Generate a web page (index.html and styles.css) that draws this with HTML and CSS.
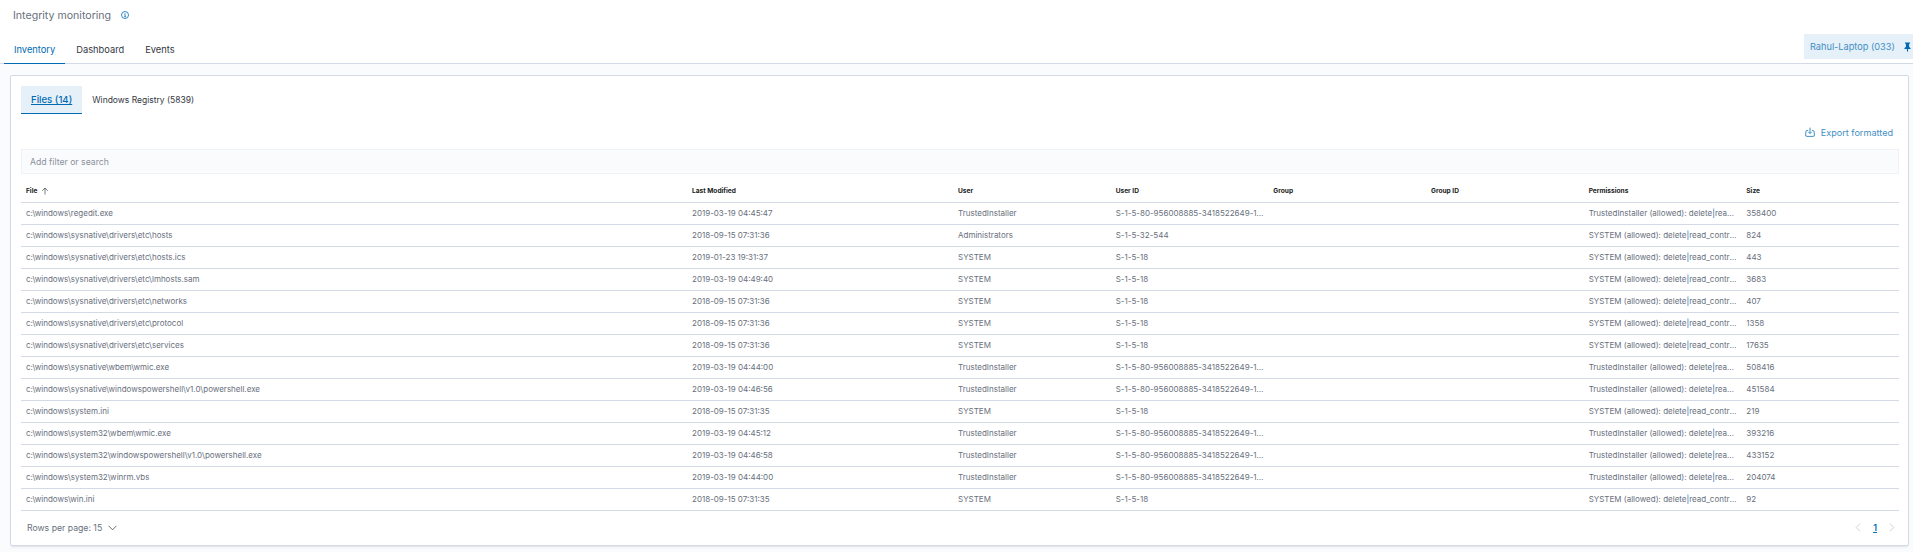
FILE: index.html
```html
<!DOCTYPE html>
<html lang="en">
<head>
    <meta charset="UTF-8">
    <title>Integrity monitoring</title>
    <link rel="stylesheet" href="styles.css">
</head>
<body>
    <header class="page-head">
        <div class="title-row">
            <h1>Integrity monitoring</h1>
            <svg class="info-icon" viewBox="0 0 16 16" width="8" height="8"><circle cx="8" cy="8" r="7" fill="none" stroke="#006bb4" stroke-width="1.6"/><path d="M6.5 7.2h1.8v4M6.3 11.4h3.6M8 4.2v1.4" fill="none" stroke="#006bb4" stroke-width="1.6"/></svg>
        </div>
        <div class="tabs-row">
            <nav class="main-tabs">
                <a class="main-tab active">Inventory</a>
                <a class="main-tab">Dashboard</a>
                <a class="main-tab">Events</a>
            </nav>
            <div class="agent-pill">
                <span>Rahul-Laptop (033)</span>
                <svg viewBox="0 0 16 16" width="9" height="10"><path d="M3.5 0h9v1.5l-1.6 1v5.2l2.6 2.3v1.500H9V16H7v-4.500H2.500V10l2.600-2.300V2.500l-1.600-1z" fill="#006bb4"/></svg>
            </div>
        </div>
    </header>

    <main class="content">
        <section class="panel">
            <div class="sub-tabs">
                <a class="sub-tab active">Files (14)</a>
                <a class="sub-tab">Windows Registry (5839)</a>
            </div>
            <div class="export-row">
                <a class="export-link">
                    <svg viewBox="0 0 16 16" width="10" height="10"><path d="M5 5.500H3.500a2 2 0 0 0-2 1.800L1 12.500a2 2 0 0 0 2 2.500h10a2 2 0 0 0 2-2.500l-.5-5.200a2 2 0 0 0-2-1.800H11M8 1v9M5 7.500 8 10.500l3-3" fill="none" stroke="#006bb4" stroke-width="1.200"/></svg>
                    Export formatted
                </a>
            </div>
            <div class="search-box">Add filter or search</div>
            <table class="files-table">
                <colgroup>
                    <col class="col-file">
                    <col class="col-date">
                    <col span="6">
                </colgroup>
                <thead>
                    <tr>
                        <th>File <svg class="sort-icon" viewBox="0 0 16 16" width="8" height="8"><path d="M8 15V2M2.500 7.500 8 2l5.500 5.500" fill="none" stroke="#343741" stroke-width="1.300"/></svg></th>
                        <th>Last Modified</th>
                        <th>User</th>
                        <th>User ID</th>
                        <th>Group</th>
                        <th>Group ID</th>
                        <th>Permissions</th>
                        <th>Size</th>
                    </tr>
                </thead>
                <tbody>
                    <tr><td>c:\windows\regedit.exe</td><td>2019-03-19 04:45:47</td><td>TrustedInstaller</td><td>S-1-5-80-956008885-3418522649-1831038044-1853292631-2271478464</td><td></td><td></td><td>TrustedInstaller (allowed): delete<i>|</i>read_control|write_dac</td><td>358400</td></tr>
                    <tr><td>c:\windows\sysnative\drivers\etc\hosts</td><td>2018-09-15 07:31:36</td><td>Administrators</td><td>S-1-5-32-544</td><td></td><td></td><td>SYSTEM (allowed): delete<i>|</i>read_control|write_dac</td><td>824</td></tr>
                    <tr><td>c:\windows\sysnative\drivers\etc\hosts.ics</td><td>2019-01-23 19:31:37</td><td>SYSTEM</td><td>S-1-5-18</td><td></td><td></td><td>SYSTEM (allowed): delete<i>|</i>read_control|write_dac</td><td>443</td></tr>
                    <tr><td>c:\windows\sysnative\drivers\etc\lmhosts.sam</td><td>2019-03-19 04:49:40</td><td>SYSTEM</td><td>S-1-5-18</td><td></td><td></td><td>SYSTEM (allowed): delete<i>|</i>read_control|write_dac</td><td>3683</td></tr>
                    <tr><td>c:\windows\sysnative\drivers\etc\networks</td><td>2018-09-15 07:31:36</td><td>SYSTEM</td><td>S-1-5-18</td><td></td><td></td><td>SYSTEM (allowed): delete<i>|</i>read_control|write_dac</td><td>407</td></tr>
                    <tr><td>c:\windows\sysnative\drivers\etc\protocol</td><td>2018-09-15 07:31:36</td><td>SYSTEM</td><td>S-1-5-18</td><td></td><td></td><td>SYSTEM (allowed): delete<i>|</i>read_control|write_dac</td><td>1358</td></tr>
                    <tr><td>c:\windows\sysnative\drivers\etc\services</td><td>2018-09-15 07:31:36</td><td>SYSTEM</td><td>S-1-5-18</td><td></td><td></td><td>SYSTEM (allowed): delete<i>|</i>read_control|write_dac</td><td>17635</td></tr>
                    <tr><td>c:\windows\sysnative\wbem\wmic.exe</td><td>2019-03-19 04:44:00</td><td>TrustedInstaller</td><td>S-1-5-80-956008885-3418522649-1831038044-1853292631-2271478464</td><td></td><td></td><td>TrustedInstaller (allowed): delete<i>|</i>read_control|write_dac</td><td>508416</td></tr>
                    <tr><td>c:\windows\sysnative\windowspowershell\v1.0\powershell.exe</td><td>2019-03-19 04:46:56</td><td>TrustedInstaller</td><td>S-1-5-80-956008885-3418522649-1831038044-1853292631-2271478464</td><td></td><td></td><td>TrustedInstaller (allowed): delete<i>|</i>read_control|write_dac</td><td>451584</td></tr>
                    <tr><td>c:\windows\system.ini</td><td>2018-09-15 07:31:35</td><td>SYSTEM</td><td>S-1-5-18</td><td></td><td></td><td>SYSTEM (allowed): delete<i>|</i>read_control|write_dac</td><td>219</td></tr>
                    <tr><td>c:\windows\system32\wbem\wmic.exe</td><td>2019-03-19 04:45:12</td><td>TrustedInstaller</td><td>S-1-5-80-956008885-3418522649-1831038044-1853292631-2271478464</td><td></td><td></td><td>TrustedInstaller (allowed): delete<i>|</i>read_control|write_dac</td><td>393216</td></tr>
                    <tr><td>c:\windows\system32\windowspowershell\v1.0\powershell.exe</td><td>2019-03-19 04:46:58</td><td>TrustedInstaller</td><td>S-1-5-80-956008885-3418522649-1831038044-1853292631-2271478464</td><td></td><td></td><td>TrustedInstaller (allowed): delete<i>|</i>read_control|write_dac</td><td>433152</td></tr>
                    <tr><td>c:\windows\system32\winrm.vbs</td><td>2019-03-19 04:44:00</td><td>TrustedInstaller</td><td>S-1-5-80-956008885-3418522649-1831038044-1853292631-2271478464</td><td></td><td></td><td>TrustedInstaller (allowed): delete<i>|</i>read_control|write_dac</td><td>204074</td></tr>
                    <tr><td>c:\windows\win.ini</td><td>2018-09-15 07:31:35</td><td>SYSTEM</td><td>S-1-5-18</td><td></td><td></td><td>SYSTEM (allowed): delete<i>|</i>read_control|write_dac</td><td>92</td></tr>
                </tbody>
            </table>
            <div class="table-foot">
                <div class="rows-per-page">
                    Rows per page: 15
                    <svg viewBox="0 0 16 16" width="9" height="9"><path d="M1 5l7 7 7-7" fill="none" stroke="#343741" stroke-width="1.300"/></svg>
                </div>
                <div class="pager">
                    <svg viewBox="0 0 16 16" width="9" height="9"><path d="M11 1 4 8l7 7" fill="none" stroke="#c2c3c6" stroke-width="1.300"/></svg>
                    <a class="page-num">1</a>
                    <svg viewBox="0 0 16 16" width="9" height="9"><path d="M5 1l7 7-7 7" fill="none" stroke="#c2c3c6" stroke-width="1.300"/></svg>
                </div>
            </div>
        </section>
    </main>
</body>
</html>
```

FILE: styles.css
```css
* {
    box-sizing: border-box;
}
html, body {
    height: 100%;
}
body {
    margin: 0;
    font-family: Inter, "Liberation Sans", sans-serif;
    color: #343741;
    background-color: #fafbfd;
    overflow: hidden;
    display: flex;
    flex-direction: column;
}
.page-head {
    background: #ffffff;
    height: 64px;
    border-bottom: 1px solid #d3dae6;
}
.title-row {
    display: flex;
    align-items: center;
    height: 30px;
    padding-left: 13px;
}
.title-row h1 {
    margin: 0;
    font-size: 10.6px;
    font-weight: 400;
    color: #69707d;
}
.info-icon {
    margin-left: 10px;
}
.tabs-row {
    display: flex;
    justify-content: space-between;
    align-items: flex-start;
    height: 33px;
    padding-left: 4px;
}
.main-tabs {
    display: flex;
    gap: 1px;
    height: 33px;
}
.main-tab {
    font-size: 9.3px;
    padding: 14px 10px 0;
    height: 34px;
}
.main-tab.active {
    color: #006bb4;
    border-bottom: 1px solid #006bb4;
}
.agent-pill {
    display: flex;
    align-items: center;
    justify-content: space-between;
    width: 109px;
    height: 25px;
    margin-top: 4px;
    padding: 0 1px 0 6px;
    font-size: 9.2px;
    white-space: nowrap;
    color: #3f8fc4;
    background: #e6f0f8;
}
.content {
    flex: 1;
    padding: 11px 4px 6px 10px;
    display: flex;
}
.panel {
    flex: 1;
    background: #ffffff;
    border: 1px solid #d3dae6;
    border-radius: 2px;
    box-shadow: 0 2px 2px -1px rgba(152, 162, 179, 0.3);
    padding: 10px 9px 0 10px;
    display: flex;
    flex-direction: column;
}
.sub-tabs {
    display: flex;
    height: 28px;
}
.sub-tab {
    display: flex;
    align-items: center;
    padding: 0 10px;
    font-size: 8.5px;
}
.sub-tab.active {
    color: #006bb4;
    font-size: 9.6px;
    font-weight: 500;
    text-decoration: underline;
    background: #e6f0f8;
    border-bottom: 1px solid #006bb4;
}
.export-row {
    display: flex;
    justify-content: flex-end;
    height: 35px;
    padding: 11px 6px 0 0;
}
.export-link {
    display: flex;
    align-items: center;
    gap: 6px;
    height: 14px;
    font-size: 9.1px;
    color: #3f8fc4;
}
.search-box {
    height: 25px;
    padding: 0 8px;
    display: flex;
    align-items: center;
    font-size: 8.7px;
    color: #8b919c;
    background: #fafbfd;
    border: 1px solid #f0f2f6;
}
.files-table {
    width: 100%;
    table-layout: fixed;
    border-collapse: collapse;
}
.col-file {
    width: 666px;
}
.col-date {
    width: 266px;
}
.files-table th {
    height: 28px;
    padding: 7px 5px 0;
    font-size: 6.6px;
    font-weight: 700;
    text-align: left;
    color: #1a1c21;
    border-bottom: 1px solid #d3dae6;
}
.sort-icon {
    margin-left: 2px;
    vertical-align: -2px;
}
.files-table td {
    height: 22px;
    padding: 0 3px 0 5px;
    font-size: 8px;
    color: #69707d;
    white-space: nowrap;
    overflow: hidden;
    text-overflow: ellipsis;
    border-bottom: 1px solid #d3dae6;
}
.files-table td i {
    font-style: normal;
    color: #006bb4;
}
.table-foot {
    flex: 1;
    display: flex;
    justify-content: space-between;
    align-items: center;
    padding: 0 3px 0 6px;
}
.rows-per-page {
    display: flex;
    align-items: center;
    gap: 6px;
    font-size: 8.7px;
    color: #69707d;
}
.pager {
    display: flex;
    align-items: center;
    gap: 10px;
}
.page-num {
    font-size: 9px;
    font-weight: 600;
    color: #006bb4;
    text-decoration: underline;
}
```
